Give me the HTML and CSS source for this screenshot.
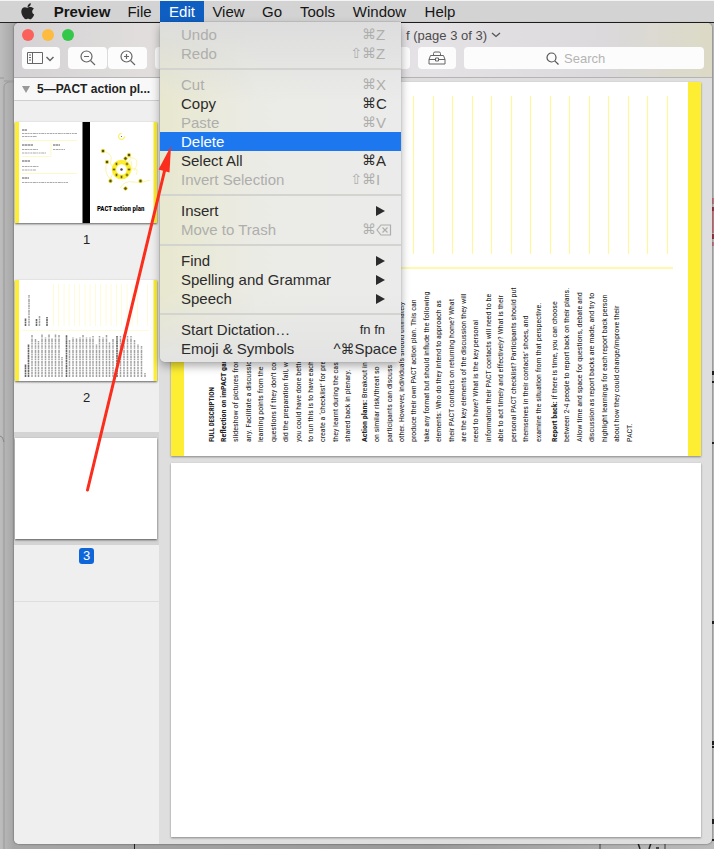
FILE: index.html
```html
<!DOCTYPE html>
<html lang="en">
<head>
<meta charset="utf-8">
<meta name="viewport" content="width=device-width, initial-scale=1">
<title>Preview</title>
<link rel="stylesheet" href="styles.css">
</head>
<body>
<nav class="menubar" aria-label="Application menu">
  <button class="apple" aria-label="Apple menu"><svg width="14" height="17" viewBox="0 0 14 17"><path fill="#262626" d="M9.8 0.2c.1 1.100-.3 2-.9 2.700-.6.700-1.500 1.200-2.300 1.100-.1-1 .3-2 .9-2.600C8.100.700 9.100.200 9.800.200zM12.900 5.700c-1 .6-1.700 1.500-1.700 2.800 0 1.500.9 2.500 2 3-.3 1-1 2.300-1.800 3.300-.6.800-1.200 1.500-2.100 1.500-.9 0-1.200-.5-2.200-.5-1.100 0-1.400.5-2.200.5-.9 0-1.600-.8-2.200-1.700C1.200 12.800.300 10.300.300 8.500c0-2.800 1.800-4.300 3.600-4.300.9 0 1.700.6 2.400.6.600 0 1.600-.7 2.800-.7 1.500 0 2.900.5 3.800 1.600z"/></svg></button>
  <button class="app">Preview</button>
  <button>File</button>
  <div class="open">
    <button class="active" aria-expanded="true">Edit</button>
    <div class="menu" role="menu">
      <button role="menuitem" disabled>Undo<span class="keys"><span>⌘</span><span>Z</span></span></button>
      <button role="menuitem" disabled>Redo<span class="keys"><span>⇧⌘</span><span>Z</span></span></button>
      <hr>
      <button role="menuitem" disabled>Cut<span class="keys"><span>⌘</span><span>X</span></span></button>
      <button role="menuitem">Copy<span class="keys"><span>⌘</span><span>C</span></span></button>
      <button role="menuitem" disabled>Paste<span class="keys"><span>⌘</span><span>V</span></span></button>
      <button role="menuitem" class="current">Delete</button>
      <button role="menuitem">Select All<span class="keys"><span>⌘</span><span>A</span></span></button>
      <button role="menuitem" disabled>Invert Selection<span class="keys"><span>⇧⌘</span><span>I</span></span></button>
      <hr>
      <button role="menuitem">Insert<i class="more"></i></button>
      <button role="menuitem" disabled>Move to Trash<span class="keys"><span>⌘</span><svg width="16" height="12" viewBox="0 0 16 12" fill="none" stroke="currentColor" stroke-width="1.2"><path d="M5 1h9.500v10H5L1 6zM6.500 3.500l5 5M11.500 3.500l-5 5"/></svg></span></button>
      <hr>
      <button role="menuitem">Find<i class="more"></i></button>
      <button role="menuitem">Spelling and Grammar<i class="more"></i></button>
      <button role="menuitem">Speech<i class="more"></i></button>
      <hr>
      <button role="menuitem">Start Dictation…<span class="fn">fn fn</span></button>
      <button role="menuitem">Emoji &amp; Symbols<span class="wide">^<b>⌘</b>Space</span></button>
    </div>
  </div>
  <button>View</button>
  <button>Go</button>
  <button>Tools</button>
  <button>Window</button>
  <button>Help</button>
</nav>

<div class="desktop">
  <svg class="scraps" width="714" height="826" viewBox="0 0 714 826" aria-hidden="true">
    <path d="M4 826V64q0-4 5-5h5" fill="none" stroke="#999"/>
    <path d="M0 55h4M4 58h10" stroke="#999"/>
    <path d="M0 413q3 0 4 6" fill="none" stroke="#888"/>
    <path d="M134.500 820v6" stroke="#222"/>
    <path d="M600 820v6M665 820v6" stroke="#777" stroke-width="2"/>
    <path d="M638 820l2 6M651 820l-2 6M656 825h3" stroke="#222" stroke-width="1.500"/>
    <path d="M713 175v6M713 188v22M713 219v4" stroke="#c17983" stroke-width="2"/>
    <path d="M713 184v4M713 211v5" stroke="#a13349" stroke-width="2"/>
    <path d="M713 348v4M712 359h2M712 420h2M713 598v3M713 718v4M712 724h2M713 796v5M712 817h2" stroke="#222" stroke-width="2"/>
  </svg>

  <div class="window">
    <header class="titlebar">
      <div class="caption">
        <div class="lights"><button class="close" aria-label="Close"></button><button class="mini" aria-label="Minimize"></button><button class="full" aria-label="Full screen"></button></div>
        <h1>f (page 3 of 3)</h1>
        <svg width="10" height="6" viewBox="0 0 10 6" fill="none" stroke="#555" stroke-width="1.300"><path d="M1 1l4 3.500L9 1"/></svg>
      </div>
      <div class="toolbar">
        <button class="tool" aria-label="View"><svg width="28" height="14" viewBox="0 0 28 14" fill="none" stroke="#666"><path d="M.5 1.500h15v11H.5zM5.500 1.500v11M2 4h2M2 6.500h2M2 9h2"/><path d="M19.500 6l3.500 3.500L26.500 6" stroke-width="1.500"/></svg></button>
        <div class="pair">
          <button class="tool" aria-label="Zoom out"><svg width="16" height="16" viewBox="0 0 16 16" fill="none" stroke="#666" stroke-width="1.200"><circle cx="6.500" cy="6.500" r="5.500"/><path d="M10.500 10.500l4.500 4.500M4 6.500h5"/></svg></button>
          <button class="tool" aria-label="Zoom in"><svg width="16" height="16" viewBox="0 0 16 16" fill="none" stroke="#666" stroke-width="1.200"><circle cx="6.500" cy="6.500" r="5.500"/><path d="M10.500 10.500l4.500 4.500M4 6.500h5M6.500 4v5"/></svg></button>
        </div>
        <div class="tool spread"></div>
        <button class="tool" aria-label="Markup toolbox"><svg width="18" height="14" viewBox="0 0 18 14" fill="none" stroke="#666"><path d="M5.500 4V2.500Q5.500 1 7 1h4q1.500 0 1.500 1.500V4M2.500 4.500h13l1.500 4v4.500H1V8.500zM1 8.500h6.500M10.500 8.500H17M7.500 7h3v3h-3z"/></svg></button>
        <label class="search"><svg width="13" height="13" viewBox="0 0 13 13" fill="none" stroke="#555" stroke-width="1.200"><circle cx="5.500" cy="5.500" r="4.500"/><path d="M8.800 8.800l3.700 3.700"/></svg><input type="text" placeholder="Search" aria-label="Search"></label>
      </div>
    </header>

    <div class="content">
      <aside class="sidebar">
        <h2><i class="fold"></i>5—PACT action pl...</h2>
        <ol class="thumbs">
          <li>
            <div class="slot"><svg class="thumb" viewBox="0 0 142 101" role="img" aria-label="Cover page">
              <path fill="#fff" d="M0 0h142v101H0z"/>
              <path fill="#fdee33" d="M0 0h4v101H0zM138.500 0h3.500v101h-3.500z"/>
              <path d="M67.500 0h7.500v101h-7.500z"/>
              <g stroke="#aaa" stroke-width="1" stroke-dasharray="2 .6 3 .5 1.500 .7">
                <path d="M7 11.500h55M7 14.500h15M7 27.500h16M7 31h24M38 27.500h12M7 44.500h17M7 48h14M7 60.500h46"/>
              </g>
              <path d="M7 8h5M7 23h11M38 23h7M7 39h8M7 56h7" stroke="#555" stroke-dasharray="2.500 .4"/>
              <path d="M7 18.500h55M7 34.500h29M7 51.500h55M36 20v14" stroke="#fff7b0" stroke-width=".7" fill="none"/>
              <g fill="none" stroke="#fbf39a" stroke-width=".8"><path d="M88 29q10 3 8 9t4 8M92 40q-4 10 4 18M114 33q6 8-10 9M110 36q18-3 9 13M95 59q2-8 5-9M105 66q5-8 13-6t17-2M106 47q14 10 10-8M116 47q9-2 5 6"/></g>
              <circle cx="106.500" cy="14.500" r="3" fill="none" stroke="#fdee33" stroke-dasharray="14 5"/>
              <circle cx="106.500" cy="14.500" r=".6" fill="#555"/>
              <circle cx="106.500" cy="47.500" r="7.500" fill="#fff" stroke="#fdee33" stroke-width="4.500"/>
              <circle cx="106.500" cy="47.500" r="1.200" fill="#444"/>
              <g fill="#554f0c" stroke="#eadb20" stroke-width=".8"><circle cx="88" cy="29" r="1.700"/><circle cx="92" cy="40" r="1.700"/><circle cx="114" cy="33" r="1.700"/><circle cx="110.500" cy="36.500" r="1.700"/><circle cx="95.500" cy="59" r="1.700"/><circle cx="110.500" cy="66.500" r="1.700"/><circle cx="125.500" cy="59" r="1.700"/><circle cx="101.500" cy="42" r="1.400"/><circle cx="112" cy="42" r="1.400"/><circle cx="99" cy="47.500" r="1.400"/><circle cx="114" cy="47.500" r="1.400"/><circle cx="101.500" cy="53" r="1.400"/><circle cx="106.500" cy="55" r="1.400"/><circle cx="112" cy="53" r="1.400"/></g>
              <text x="82" y="89">PACT action plan</text>
            </svg></div>
            <span class="num">1</span>
          </li>
          <li>
            <div class="slot"><svg class="thumb" viewBox="0 0 142 101" role="img" aria-label="Description page">
              <path fill="#fff" d="M0 0h142v101H0z"/>
              <path fill="#fdee33" d="M0 0h4v101H0zM138.500 0h3.500v101h-3.500z"/>
              <path stroke="#fffbd6" fill="none" d="M38.500 4v42M43.500 4v42M49 4v42M54 4v42M59.500 4v42M64.500 4v42M70 4v42M75 4v42M80.500 4v42M85.500 4v42M91 4v42M96 4v42M101.500 4v42M106.500 4v42M112 4v42M117 4v42M122.500 4v42M132.500 4v42M7 50.500h127"/>
              <g stroke="#a2a2a4" stroke-width="1.500" stroke-dasharray="2 .5 3 .6 1 .5 2.500 .7">
                <path d="M14 46V15M24.500 46V36M17 97V55M20.500 97V59M23.500 97V61M27 97V54M30.500 97V57M34 97V54M37 97V58M40.500 97V54M44 97V55M47 97V77M54.500 97V60M58 97V57M61.500 97V58M65 97V57M68 97V55M71.500 97V57M75 97V57M78 97V56M81.500 97V64M84.500 97V56M88 97V57M91.500 97V55M94.500 97V62M98 97V59M105.500 97V56M109 97V54M112.500 97V56M116 97V56M119.500 97V60M123 97V64M126.500 97V66M130 97V93"/>
              </g>
              <path d="M10.500 46v-8M21.500 46v-7M32 46v-9M10.500 97V84M13.500 97V64M51.500 97V55M102 97V56" stroke="#666" stroke-width="1.600" stroke-dasharray="2.500 .5 1.500 .4"/>
            </svg></div>
            <span class="num">2</span>
          </li>
          <li class="selected">
            <div class="slot"><svg class="thumb" viewBox="0 0 142 101" role="img" aria-label="Blank page"><path fill="#fff" d="M0 0h142v101H0z"/></svg></div>
            <span class="num">3</span>
          </li>
        </ol>
      </aside>

      <main class="pages">
        <section class="page banded">
          <svg class="rules" viewBox="0 0 504 187" fill="none" stroke="#fff7a0" stroke-width="1.200" aria-hidden="true"><path d="M229.500 14v158M249.500 14v158M268.500 14v158M288.500 14v158M307.500 14v158M327.500 14v158M346.500 14v158M366.500 14v158M385.500 14v158M405.500 14v158M424.500 14v158M444.500 14v158M463.500 14v158M483.500 14v158"/><path d="M14 186h475" stroke="#fdf35a"/></svg>
          <article class="copy">
            <p class="eyebrow"><span>FULL DESCRIPTION</span></p>
            <p class="n11">
              <span><b>Reflection on imPACT game:</b></span>
              <span>slideshow of pictures from</span>
              <span>any. Facilitate a discussion</span>
              <span>learning points from the</span>
              <span>questions if they don’t come</span>
              <span>did the preparation fail, what</span>
              <span>you could have done better</span>
              <span>to run this is to have each</span>
              <span>create a ‘checklist’ for pre</span>
              <span>they learnt during the case</span>
              <span>shared back in plenary.</span>
            </p>
            <p class="n15">
              <span><b>Action plans:</b> Breakout in</span>
              <span>on similar risk/threat so</span>
              <span>participants can discuss</span>
              <span>other. However, individuals should ultimately</span>
              <span>produce their own PACT action plan. This can</span>
              <span>take any format but should influde the following</span>
              <span>elements: Who do they intend to approach as</span>
              <span>their PACT contacts on returning home? What</span>
              <span>are the key elements of the discussion they will</span>
              <span>need to have? What is the key personal</span>
              <span>information their PACT contacts will need to be</span>
              <span>able to act timely and effectively? What is their</span>
              <span>personal PACT checklist? Participants should put</span>
              <span>themselves in their contacts’ shoes, and</span>
              <span>examine the situation from that perspective.</span>
            </p>
            <p class="n7">
              <span><b>Report back:</b> if there is time, you can choose</span>
              <span>between 2-4 people to report back on their plans.</span>
              <span>Allow time and space for questions, debate and</span>
              <span>discussion as report backs are made, and try to</span>
              <span>highlight learnings for each report back person</span>
              <span>about how they could change/improve their</span>
              <span>PACT.</span>
            </p>
          </article>
        </section>
        <section class="page" aria-label="Page 3"></section>
      </main>
    </div>
  </div>

  <svg class="arrow" width="180" height="480" viewBox="0 0 180 480" aria-hidden="true"><path d="M87.500 467L165 146" stroke="#fb2d1c" stroke-width="3" stroke-linecap="round"/><path d="M171 123l-12.500 23.500 11 3z" fill="#fb2d1c"/></svg>
</div>
</body>
</html>
```
FILE: styles.css
```css
* { box-sizing: border-box; }

body {
  margin: 0;
  min-height: 100vh;
  display: flex;
  flex-direction: column;
  font-family: "Liberation Sans", "DejaVu Sans", sans-serif;
  font-size: 15px;
  color: #222;
}

button {
  border: 0;
  padding: 0;
  background: none;
  font: inherit;
  color: inherit;
}

svg { display: block; }

/* menu bar */
.menubar {
  display: grid;
  grid-template-columns: 45px 74px 41px 44px 49px 38px 53px 71px 50px;
  height: 23px;
  background: #d3d3d3;
  border-top: 1px solid #f4f4f4;
  border-bottom: 1px solid #222;
  color: #161616;
}
.apple { padding-left: 21px; }
.app { font-weight: bold; }
.open { position: relative; display: grid; z-index: 3; }
.active { background: #0f5fc2; color: #fff; }

.menu {
  position: absolute;
  top: 100%;
  left: 0;
  width: 241px;
  padding: 3px 0 4px;
  background:
    linear-gradient(to bottom, #dddddd 0, #dddddd00 80px),
    linear-gradient(to top, #e3e3e3 0, #e3e3e300 70px),
    linear-gradient(to right, #e8e8cf, #ebebe6 40%, #ebebeb);
  border-radius: 0 0 5px 5px;
  box-shadow: 0 4px 10px #0005, 0 0 1px #0006;
}
.menu button {
  display: flex;
  align-items: center;
  width: 100%;
  height: 19px;
  padding-left: 21px;
  line-height: 19px;
  color: #2b2b2b;
}
.menu button:disabled { color: #aeaeac; }
.menu .current { background: #1d78f0; color: #fff; }
.menu hr {
  height: 2px;
  margin: 5px 0;
  border: 0;
  background: #d3d3d0;
}
.keys {
  display: grid;
  grid-template-columns: 40px 25px;
  align-items: center;
  margin-left: auto;
  text-align: left;
}
.keys span:first-child {
  font-family: "DejaVu Sans", sans-serif;
  font-size: 14px;
  text-align: right;
}
.wide { margin-left: auto; padding-right: 4px; }
.wide b { font: 14px "DejaVu Sans", sans-serif; }
.fn { margin-left: auto; padding-right: 16px; font-size: 13px; }
.more {
  margin-left: auto;
  margin-right: 16px;
  border-left: 9px solid #2b2b2b;
  border-top: 5px solid transparent;
  border-bottom: 5px solid transparent;
}

/* desktop and window */
.desktop {
  position: relative;
  flex: 1;
  display: flex;
  padding: 0 2px 5px 14px;
  background: linear-gradient(to right, #bdbdbd, #a6a6a6 14px, #9a9a9a 60%, #bbb);
}
.scraps { position: absolute; left: 0; top: 0; }
.arrow { position: absolute; left: 0; top: 0; z-index: 4; }

.window {
  position: relative;
  flex: 1;
  display: flex;
  flex-direction: column;
  border-radius: 5px;
  overflow: hidden;
  background: #dedede;
  box-shadow: 0 0 2px #0009;
}
.titlebar {
  padding: 0 8px 8px;
  background: linear-gradient(to right, #d5d2d5, #e0dddc 18%, #e5e2e6 60%, #dbd9db 85%, #dcdac5);
  border-bottom: 1px solid #b5b3b3;
}
.caption {
  display: flex;
  align-items: center;
  height: 24px;
  gap: 4px;
}
.lights { display: flex; gap: 8px; }
.lights button { width: 12px; height: 12px; border-radius: 50%; }
.close { background: #fc605b; }
.mini { background: #fdbc40; }
.full { background: #34c84a; }
h1 {
  margin: 0 0 0 auto;
  font-size: 13px;
  font-weight: normal;
  color: #4c4c4c;
}
.caption > svg { margin-right: 203px; }

.toolbar { display: flex; gap: 8px; }
.tool {
  display: grid;
  place-items: center;
  width: 38px;
  height: 22px;
  border-radius: 4px;
  background: #fcfcfc;
}
.pair { display: flex; gap: 1px; }
.pair .tool { width: 39px; }
.spread { flex: 1; }
.search {
  display: flex;
  align-items: center;
  gap: 5px;
  width: 240px;
  height: 22px;
  padding-left: 82px;
  border-radius: 4px;
  background: #fcfcfc;
}
.search input {
  flex: 1;
  min-width: 0;
  border: 0;
  padding: 0;
  background: none;
  font: 13px "Liberation Sans", sans-serif;
}
.search input::placeholder { color: #b4b4b4; }

.content { flex: 1; display: flex; }

/* sidebar */
.sidebar { flex: none; width: 145px; background: #efefef; }
h2 {
  display: flex;
  align-items: center;
  gap: 7px;
  height: 23px;
  margin: 0;
  padding-left: 8px;
  border-bottom: 1px solid #cfcfcf;
  background: #f8f8f8;
  font-size: 12px;
  white-space: nowrap;
}
.fold {
  border-top: 7px solid #999;
  border-left: 4px solid transparent;
  border-right: 4px solid transparent;
}
.thumbs {
  display: grid;
  gap: 23px;
  margin: 0;
  padding: 15px 0 34px;
  list-style: none;
  border-bottom: 1px solid #dedede;
}
.thumbs li { display: grid; justify-items: center; }
.slot { width: 100%; padding: 6px 2px 6px 1px; }
.selected .slot { background: #d4d4d4; }
.thumb { width: 100%; box-shadow: 0 1px 2px #0009; }
.thumb text { font: bold 7px "Liberation Sans Narrow", "Roboto Condensed", sans-serif; }
.num {
  margin: 3px 0;
  padding: 0 4px;
  border-radius: 3px;
  font-size: 13px;
  line-height: 16px;
}
.selected .num { background: #0f66d8; color: #fff; }

/* document pages */
.pages {
  flex: 1;
  min-width: 0;
  display: grid;
  grid-template-columns: minmax(0, 1fr);
  align-content: start;
  gap: 7px;
  padding: 4px 11px 6px 12px;
}
.page {
  aspect-ratio: 530 / 374;
  background: #fff;
  box-shadow: 0 1px 2px #0006;
}
.banded {
  display: flex;
  flex-direction: column;
  border: solid #fdee33;
  border-width: 0 13px;
}
.copy {
  flex: 1;
  display: flex;
  gap: 4px;
  padding: 0 52px 14px 22px;
  font-family: "Liberation Sans Narrow", "Roboto Condensed", "Liberation Sans", sans-serif;
  font-size: 8px;
  line-height: 12px;
}
.copy p { display: flex; margin: 0; min-width: 0; }
.copy span {
  flex: 1 1 0;
  min-width: 0;
  writing-mode: vertical-rl;
  transform: rotate(180deg);
  white-space: nowrap;
}
.copy .eyebrow { width: 8px; font-size: 7px; font-weight: bold; }
.n11 { flex: 11; }
.n15 { flex: 15; }
.n7 { flex: 7; }
```
